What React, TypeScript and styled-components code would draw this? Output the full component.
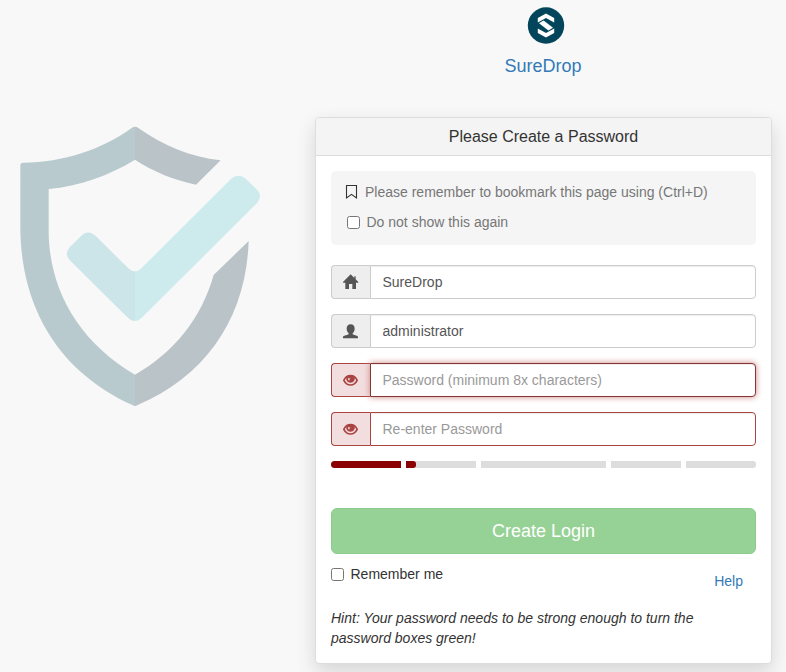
import React from 'react';
import styled, { createGlobalStyle, css } from 'styled-components';

const GlobalStyle = createGlobalStyle`
  *, *::before, *::after { box-sizing: border-box; }
  body {
    margin: 0;
    overflow: hidden;
    background: #f8f8f8;
    color: #333;
    font: 14px/20px "Liberation Sans", Arial, sans-serif;
  }
  input, button { font: inherit; }
  svg { display: block; }
`;

const Page = styled.div`
  display: flex;
  height: 672px;
`;

const Artwork = styled.aside`
  width: 315px;
  flex: none;
  padding-top: 110px;
`;

const Main = styled.main`
  width: 457px;
  flex: none;
`;

const Brand = styled.a`
  display: flex;
  flex-direction: column;
  align-items: center;
  height: 117px;
  padding-top: 6px;
  padding-right: 1px;
  color: #337ab7;
  font-size: 18px;
  line-height: 26px;
  text-decoration: none;
  svg {
    margin: 0 0 9px 6px;
  }
`;

const Panel = styled.section`
  height: 547px;
  border: 1px solid #ddd;
  border-radius: 4px;
  background: #fff;
  box-shadow: 0 8px 20px rgba(0, 0, 0, 0.14);
`;

const PanelHeading = styled.h1`
  margin: 0;
  height: 38px;
  border-bottom: 1px solid #ddd;
  border-radius: 3px 3px 0 0;
  background: #f4f4f4;
  text-align: center;
  font-size: 16px;
  font-weight: 400;
  line-height: 37px;
`;

const PanelBody = styled.form`
  padding: 15px;
`;

const Notice = styled.div`
  height: 74px;
  margin-bottom: 20px;
  padding: 11px 14px;
  border-radius: 5px;
  background: #f5f5f5;
  color: #777;
`;

const NoticeLine = styled.div`
  display: flex;
  align-items: center;
  height: 20px;
  gap: 7px;
  & + & { margin-top: 10px; }
`;

const CheckLabel = styled.label<{ $inset?: boolean }>`
  display: flex;
  align-items: center;
  gap: 6.5px;
  padding-left: ${(p) => (p.$inset ? 2 : 0)}px;
  height: 20px;
`;

const Checkbox = styled.input.attrs({ type: 'checkbox' })`
  width: 13px;
  height: 13px;
  margin: 1px 0 0;
`;

const errorField = css`
  --line: #a94442;
  --addon: #f2dede;
  --icon: #a94442;
`;

const Field = styled.div<{ $error?: boolean }>`
  --line: #ccc;
  --addon: #eee;
  --icon: #555;
  display: flex;
  height: 34px;
  margin-bottom: 15px;
  ${(p) => p.$error && errorField}
`;

const Addon = styled.span`
  display: flex;
  align-items: center;
  justify-content: center;
  width: 39px;
  border: 1px solid var(--line);
  border-right: 0;
  border-radius: 4px 0 0 4px;
  background: var(--addon);
  color: var(--icon);
`;

const TextInput = styled.input<{ $active?: boolean }>`
  flex: 1;
  min-width: 0;
  padding: 6px 11.5px;
  border: 1px solid ${(p) => (p.$active ? '#843534' : 'var(--line)')};
  border-radius: 0 4px 4px 0;
  outline: 0;
  background: #fff;
  color: #555;
  box-shadow: inset 0 1px 1px rgba(0, 0, 0, 0.075)${(p) => (p.$active ? ', 0 0 6px #ce8483' : '')};
  &::placeholder { color: #999; opacity: 1; }
`;

const Strength = styled.div`
  display: grid;
  grid-template-columns: 70px 70px 125px 70px 70px;
  column-gap: 5px;
  height: 7px;
  overflow: hidden;
  border-radius: 3px;
`;

const Segment = styled.span<{ $fill?: string }>`
  background: #ddd;
  &::before {
    content: "";
    display: block;
    width: ${(p) => p.$fill || '0'};
    height: 100%;
    border-radius: ${(p) => (p.$fill === '100%' ? '3px 0 0 3px' : '0 3px 3px 0')};
    background: #8b0000;
  }
`;

const SubmitButton = styled.button`
  display: block;
  width: 100%;
  height: 46px;
  margin-top: 40px;
  border: 1px solid #8ccb8c;
  border-radius: 6px;
  background: #96d296;
  color: #fff;
  font-size: 18px;
  line-height: 24px;
`;

const Options = styled.div`
  display: flex;
  justify-content: space-between;
  height: 37px;
  margin-top: 10px;
  padding-right: 13px;
`;

const HelpLink = styled.a`
  padding-top: 7px;
  color: #337ab7;
  text-decoration: none;
`;

const Hint = styled.p`
  margin: 7px 0 0;
  font-style: italic;
`;

const ShieldArt = () => (
  <svg width="280" height="310" viewBox="0 0 840 930" aria-hidden="true">
    <path fill="#b9cacf" d="M405 50Q400 50 395 54C305 119 190 157 69 158Q61 158 61 166V350C61 530 128 762 397 885Q401 888 405 888V794C230 691 146 532 146 360V237C238 229 328 196 405 149Z" />
    <path fill="#bac3c8" d="M405 50Q410 50 415 54C490 107 570 141 662 151L588 224C522 210 462 186 405 149ZM746 393C739 620 620 797 413 885Q409 888 405 888V794C524 726 604 625 641 495Z" />
    <path fill="#cce5e8" d="M405 484Q394 484 385 475L288 379Q264 355 241 380L210 411Q192 429 208 449L382 622Q392 633 405 633Z" />
    <path fill="#cdebed" d="M405 484Q415 484 424 475L693 207Q715 188 738 207L772 240Q788 258 772 278L427 622Q417 633 405 633Z" />
  </svg>
);

const BrandMark = () => (
  <svg width="38" height="38" viewBox="0 0 38 38" aria-hidden="true">
    <circle cx="19" cy="19.5" r="18.2" fill="#03455a" />
    <g fill="#fff">
      <path d="M10.8 16.6V12L19 7.5L27.2 12V16.6L19 12.1Z" />
      <path d="M10.8 22.4V27L19 31.5L27.2 27V22.4L19 26.9Z" />
      <path d="M12 17.2L16.6 14.6L26 21.8L21.4 24.4Z" />
    </g>
  </svg>
);

const BookmarkIcon = () => (
  <svg width="13" height="16" viewBox="0 0 13 16" aria-hidden="true">
    <path d="M1.5 1.5H11.5V14L6.5 10.4L1.5 14Z" fill="none" stroke="#333" strokeWidth="1.1" />
  </svg>
);

const HomeIcon = () => (
  <svg width="16" height="16" viewBox="0 0 48 48" fill="currentColor" aria-hidden="true">
    <path d="M23 1L34 12V7H38V16L46 24V26H39V45H28V30H18V45H7V26H0V24Z" />
  </svg>
);

const UserIcon = () => (
  <svg width="16" height="15" viewBox="0 0 48 45" fill="currentColor" aria-hidden="true">
    <path d="M23 1C31 1 35 6 35 14C35 20 32 25 29 28V31C35 34 45 35 45 39V43H0V39C0 35 11 34 17 31V28C14 25 11 20 11 14C11 6 15 1 23 1Z" />
  </svg>
);

const EyeIcon = () => (
  <svg width="16" height="13" viewBox="0 0 48 39" aria-hidden="true">
    <g transform="translate(-1.5 0)">
      <path fill="none" stroke="currentColor" strokeWidth="5" strokeLinejoin="round" d="M4 19C8 10 14 5 24 5C34 5 40 10 44 19C39 29 33 33 24 33C15 33 9 29 4 19Z" />
      <path fill="currentColor" fillRule="evenodd" d="M13 6H35C40 17 34 26 24 26C14 26 8 17 13 6ZM18 11C16 14 17 18 20 20C20 17 22 15 25 14C22 14 20 13 18 11Z" />
    </g>
  </svg>
);

export default function App() {
  return (
    <>
      <GlobalStyle />
      <Page>
        <Artwork><ShieldArt /></Artwork>
        <Main>
          <Brand><BrandMark />SureDrop</Brand>
          <Panel>
            <PanelHeading>Please Create a Password</PanelHeading>
            <PanelBody>
              <Notice>
                <NoticeLine><BookmarkIcon />Please remember to bookmark this page using (Ctrl+D)</NoticeLine>
                <NoticeLine>
                  <CheckLabel $inset><Checkbox />Do not show this again</CheckLabel>
                </NoticeLine>
              </Notice>
              <Field>
                <Addon><HomeIcon /></Addon>
                <TextInput defaultValue="SureDrop" />
              </Field>
              <Field>
                <Addon><UserIcon /></Addon>
                <TextInput defaultValue="administrator" />
              </Field>
              <Field $error>
                <Addon><EyeIcon /></Addon>
                <TextInput $active type="password" placeholder="Password (minimum 8x characters)" />
              </Field>
              <Field $error>
                <Addon><EyeIcon /></Addon>
                <TextInput type="password" placeholder="Re-enter Password" />
              </Field>
              <Strength>
                <Segment $fill="100%" />
                <Segment $fill="10px" />
                <Segment />
                <Segment />
                <Segment />
              </Strength>
              <SubmitButton type="button">Create Login</SubmitButton>
              <Options>
                <CheckLabel><Checkbox />Remember me</CheckLabel>
                <HelpLink>Help</HelpLink>
              </Options>
              <Hint>Hint: Your password needs to be strong enough to turn the password boxes green!</Hint>
            </PanelBody>
          </Panel>
        </Main>
      </Page>
    </>
  );
}
